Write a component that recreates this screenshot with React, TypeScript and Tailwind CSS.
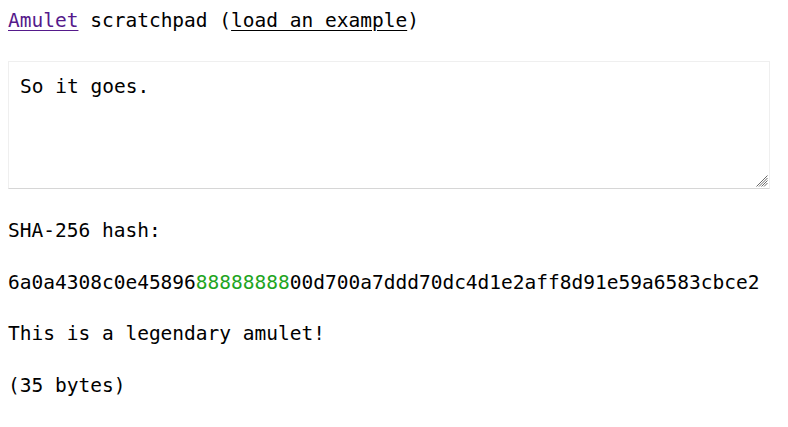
export default function App() {
  const mono = { fontFamily: '"DejaVu Sans Mono", monospace' };
  return (
    <div className="min-h-screen bg-white px-2 pt-[5px] text-[19.5px] text-black" style={mono}>
      <div className="flex h-[32px] items-center">
        <a href="#" className="text-[#551a8b] underline underline-offset-[3px]">
          Amulet
        </a>
        <span className="whitespace-pre"> scratchpad (</span>
        <a href="#" className="text-black underline underline-offset-[3px]">
          load an example
        </a>
        <span>)</span>
      </div>
      <div className="relative mt-[24px] w-[762px]">
        <textarea
          className="block h-[128px] w-full resize-none border border-[#efefef] border-b-[#d6d6d6] bg-white px-[11px] pt-[11px] pb-[9px] leading-[28px] outline-none"
          style={mono}
          defaultValue="So it goes."
        />
        <svg
          className="pointer-events-none absolute right-[2px] bottom-[2px]"
          width="12"
          height="12"
          viewBox="0 0 12 12"
        >
          <g stroke="#6b6b6b" strokeWidth="1">
            <line x1="11.5" y1="0.5" x2="0.5" y2="11.5" />
            <line x1="11.5" y1="3" x2="3" y2="11.5" />
            <line x1="11.5" y1="5.5" x2="5.5" y2="11.5" />
            <line x1="11.5" y1="8" x2="8" y2="11.5" />
          </g>
        </svg>
      </div>
      <div className="mt-[26px] flex flex-col gap-[19.5px]">
        <p className="h-[32px] leading-[32px]">SHA-256 hash:</p>
        <p className="h-[32px] leading-[32px]">
          6a0a4308c0e45896
          <span className="text-[#1fa51f]">88888888</span>
          00d700a7ddd70dc4d1e2aff8d91e59a6583cbce2
        </p>
        <p className="h-[32px] leading-[32px]">This is a legendary amulet!</p>
        <p className="h-[32px] leading-[32px]">(35 bytes)</p>
      </div>
    </div>
  );
}
